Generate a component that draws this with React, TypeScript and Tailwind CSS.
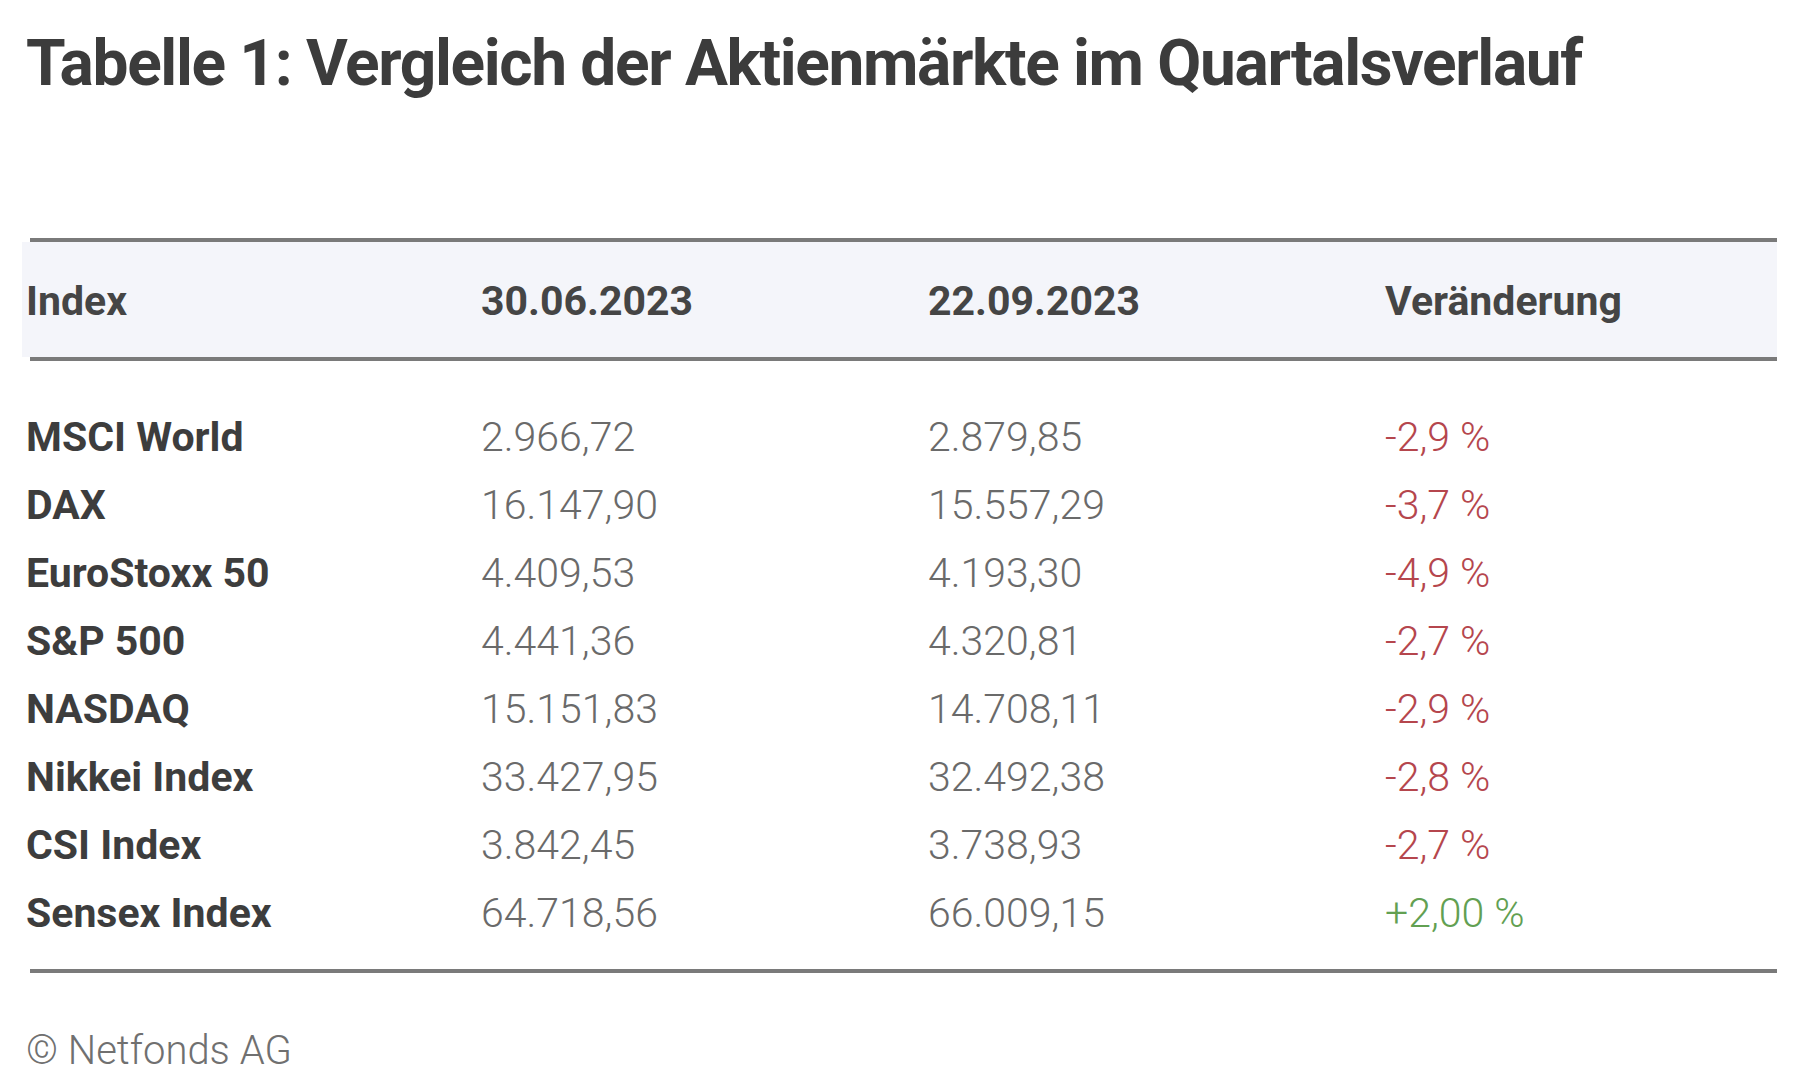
import React from "react";

const rows = [
  ["MSCI World", "2.966,72", "2.879,85", "-2,9 %"],
  ["DAX", "16.147,90", "15.557,29", "-3,7 %"],
  ["EuroStoxx 50", "4.409,53", "4.193,30", "-4,9 %"],
  ["S&P 500", "4.441,36", "4.320,81", "-2,7 %"],
  ["NASDAQ", "15.151,83", "14.708,11", "-2,9 %"],
  ["Nikkei Index", "33.427,95", "32.492,38", "-2,8 %"],
  ["CSI Index", "3.842,45", "3.738,93", "-2,7 %"],
  ["Sensex Index", "64.718,56", "66.009,15", "+2,00 %"],
];

export default function App() {
  return (
    <div className="w-[1818px] h-[1080px] bg-white font-['Roboto',sans-serif] pl-[22px] pr-[41px] overflow-hidden">
      <h1 className="mt-[32px] pl-[4px] text-[64px] leading-none font-bold text-[#3c3c3c] tracking-[-1.35px]">
        Tabelle 1: Vergleich der Aktienmärkte im Quartalsverlauf
      </h1>
      <div className="mt-[142px]">
        <div className="ml-[8px] h-[4px] bg-[#7a7a7a]" />
        <div className="bg-[#f4f5fa] h-[115px] pl-[4px] grid grid-cols-[455px_447px_457px_1fr] items-center pt-[4px] text-[41px] font-bold text-[#454545]">
          <div>Index</div>
          <div>30.06.2023</div>
          <div>22.09.2023</div>
          <div>Veränderung</div>
        </div>
        <div className="ml-[8px] h-[4px] bg-[#7a7a7a]" />
        <div className="pt-[43px] pb-[21px] pl-[4px]">
          {rows.map((r) => (
            <div
              key={r[0]}
              className="grid grid-cols-[455px_447px_457px_1fr] items-center h-[68px] text-[41px]"
            >
              <div className="font-bold text-[#3d3d3d]">{r[0]}</div>
              <div className="font-light text-[#6a6a6a]">{r[1]}</div>
              <div className="font-light text-[#6a6a6a]">{r[2]}</div>
              <div
                className={
                  r[3].startsWith("+")
                    ? "font-light text-[#62a052]"
                    : "font-light text-[#b5464d]"
                }
              >
                {r[3]}
              </div>
            </div>
          ))}
        </div>
        <div className="ml-[8px] h-[4px] bg-[#7a7a7a]" />
        <div className="mt-[58px] pl-[4px] text-[40px] leading-none font-light text-[#707070]">
          © Netfonds AG
        </div>
      </div>
    </div>
  );
}
